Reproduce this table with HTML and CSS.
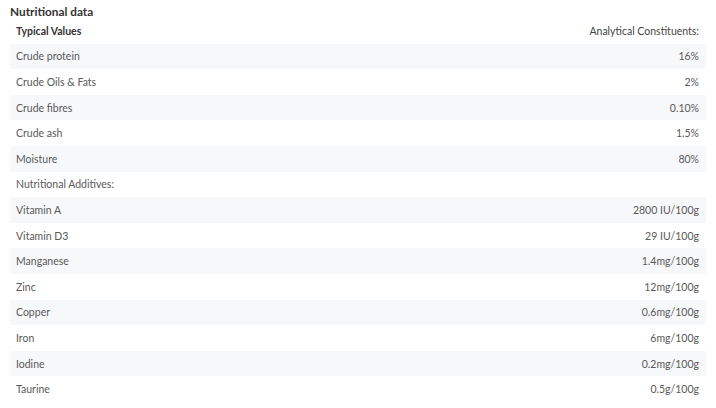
FILE: index.html
```html
<!DOCTYPE html>
<html lang="en">
<head>
    <meta charset="UTF-8">
    <title>Nutritional data</title>
    <link rel="stylesheet" href="styles.css">
</head>
<body>
    <div class="nutrition">
        <h3 class="title">Nutritional data</h3>
        <table class="data">
            <thead>
                <tr>
                    <th>Typical Values</th>
                    <th class="val">Analytical Constituents:</th>
                </tr>
            </thead>
            <tbody>
                <tr><td>Crude protein</td><td class="val">16%</td></tr>
                <tr><td>Crude Oils &amp; Fats</td><td class="val">2%</td></tr>
                <tr><td>Crude fibres</td><td class="val">0.10%</td></tr>
                <tr><td>Crude ash</td><td class="val">1.5%</td></tr>
                <tr><td>Moisture</td><td class="val">80%</td></tr>
                <tr><td>Nutritional Additives:</td><td class="val"></td></tr>
                <tr><td>Vitamin A</td><td class="val">2800 IU/100g</td></tr>
                <tr><td>Vitamin D3</td><td class="val">29 IU/100g</td></tr>
                <tr><td>Manganese</td><td class="val">1.4mg/100g</td></tr>
                <tr><td>Zinc</td><td class="val">12mg/100g</td></tr>
                <tr><td>Copper</td><td class="val">0.6mg/100g</td></tr>
                <tr><td>Iron</td><td class="val">6mg/100g</td></tr>
                <tr><td>Iodine</td><td class="val">0.2mg/100g</td></tr>
                <tr><td>Taurine</td><td class="val">0.5g/100g</td></tr>
            </tbody>
        </table>
    </div>
</body>
</html>
```

FILE: styles.css
```css
body {
    margin: 0;
    background: #fff;
    font-family: Lato, "Open Sans", sans-serif;
}

.nutrition {
    padding: 5px 10px 0 10px;
}

.title {
    margin: 0;
    font-size: 11.8px;
    font-weight: 700;
    color: #333;
    line-height: 13px;
}

.data {
    width: 100%;
    border-collapse: collapse;
    font-size: 10.5px;
    color: #595959;
}

.data th,
.data td {
    height: 25.6px;
    padding: 0 7px 0 6px;
    text-align: left;
    vertical-align: middle;
}

.data th {
    font-weight: 700;
    color: #333;
}

.data .val {
    text-align: right;
}

.data th.val {
    font-weight: 400;
    color: #444;
}

.data tbody tr:nth-child(odd) {
    background: #f7f8fa;
}
```
